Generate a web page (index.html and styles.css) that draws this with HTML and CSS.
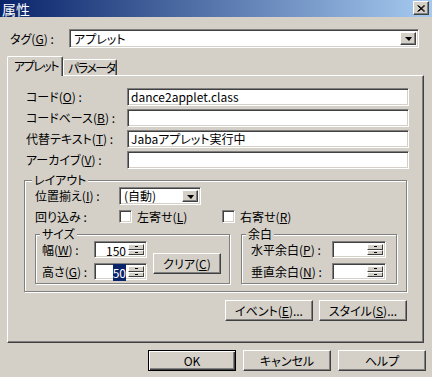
FILE: index.html
```html
<!DOCTYPE html>
<html lang="ja">
<head>
  <meta charset="UTF-8">
  <title>属性</title>
  <link rel="stylesheet" href="styles.css">
</head>
<body>
  <div class="titlebar">
    <span class="title">属性</span>
    <span class="close-btn">
      <svg width="8" height="7" viewBox="0 0 8 7"><path d="M0.5 0.5 L7 6.5 M1.5 0.5 L8 6.5 M7 0.5 L0.5 6.5 M8 0.5 L1.5 6.5" stroke="#000" stroke-width="1" fill="none"/></svg>
    </span>
  </div>

  <div class="tag-row">
    <span class="tag-label">タグ(<u>G</u>) :</span>
    <div class="combo combo-tag">
      <span class="combo-text">アプレット</span>
      <span class="drop-btn"><span class="arrow"></span></span>
    </div>
  </div>

  <div class="tabs">
    <div class="tab active">アプレット</div>
    <div class="tab">パラメータ</div>
  </div>

  <div class="panel">
    <div class="field-row">
      <span class="field-label">コード(<u>O</u>) :</span>
      <div class="textbox">dance2applet.class</div>
    </div>
    <div class="field-row">
      <span class="field-label">コードベース(<u>B</u>) :</span>
      <div class="textbox"></div>
    </div>
    <div class="field-row">
      <span class="field-label">代替テキスト(<u>T</u>) :</span>
      <div class="textbox">Jabaアプレット実行中</div>
    </div>
    <div class="field-row">
      <span class="field-label">アーカイブ(<u>V</u>) :</span>
      <div class="textbox"></div>
    </div>

    <div class="group layout-group">
      <div class="group-title">レイアウト</div>
      <div class="layout-row">
        <span class="layout-label">位置揃え(<u>I</u>) :</span>
        <div class="combo combo-align">
          <span class="combo-text">(自動)</span>
          <span class="drop-btn"><span class="arrow"></span></span>
        </div>
      </div>
      <div class="layout-row wrap-row">
        <span class="layout-label">回り込み :</span>
        <span class="check-item"><span class="checkbox"></span><span>左寄せ(<u>L</u>)</span></span>
        <span class="check-item"><span class="checkbox"></span><span>右寄せ(<u>R</u>)</span></span>
      </div>

      <div class="sub-groups">
        <div class="group size-group">
          <div class="group-title">サイズ</div>
          <div class="size-body">
            <div class="spin-rows">
              <div class="spin-row">
                <span class="spin-label size-label">幅(<u>W</u>) :</span>
                <div class="spinbox">
                  <span class="spin-value">150</span>
                  <span class="spin-btns"><span class="spin-up"></span><span class="spin-down"></span></span>
                </div>
              </div>
              <div class="spin-row">
                <span class="spin-label size-label">高さ(<u>G</u>) :</span>
                <div class="spinbox">
                  <span class="spin-value"><span class="selected">50</span></span>
                  <span class="spin-btns"><span class="spin-up"></span><span class="spin-down"></span></span>
                </div>
              </div>
            </div>
            <button class="btn clear-btn">クリア(<u>C</u>)</button>
          </div>
        </div>

        <div class="group margin-group">
          <div class="group-title">余白</div>
          <div class="spin-rows">
            <div class="spin-row">
              <span class="spin-label margin-label">水平余白(<u>P</u>) :</span>
              <div class="spinbox wide">
                <span class="spin-value"></span>
                <span class="spin-btns"><span class="spin-up"></span><span class="spin-down"></span></span>
              </div>
            </div>
            <div class="spin-row">
              <span class="spin-label margin-label">垂直余白(<u>N</u>) :</span>
              <div class="spinbox wide">
                <span class="spin-value"></span>
                <span class="spin-btns"><span class="spin-up"></span><span class="spin-down"></span></span>
              </div>
            </div>
          </div>
        </div>
      </div>
    </div>

    <div class="panel-buttons">
      <button class="btn">イベント(<u>E</u>)...</button>
      <button class="btn">スタイル(<u>S</u>)...</button>
    </div>
  </div>

  <div class="dialog-buttons">
    <button class="btn default">OK</button>
    <button class="btn">キャンセル</button>
    <button class="btn">ヘルプ</button>
  </div>
</body>
</html>
```

FILE: styles.css
```css
* {
  box-sizing: border-box;
}

body {
  margin: 0;
  width: 432px;
  height: 377px;
  overflow: hidden;
  background: #d4d0c8;
  font-family: "Noto Sans CJK JP", "Noto Sans", sans-serif;
  font-size: 12px;
  line-height: 14px;
  font-feature-settings: "palt";
  white-space: nowrap;
  color: #000;
}

u {
  text-decoration: underline;
  text-underline-offset: 1px;
}

/* title bar */
.titlebar {
  height: 17px;
  display: flex;
  justify-content: space-between;
  align-items: flex-start;
  padding: 1px 3px 0 2px;
  background: linear-gradient(90deg, #0a246a, #a6caf0);
  color: #fff;
}

.title {
  font-size: 14px;
  line-height: 16px;
}

.close-btn {
  width: 16px;
  height: 14px;
  display: flex;
  justify-content: center;
  align-items: center;
  background: #d4d0c8;
  border: 1px solid;
  border-color: #fff #404040 #404040 #fff;
  box-shadow: inset -1px -1px #808080;
}

/* shared control looks */
.combo,
.textbox,
.spinbox,
.checkbox {
  background: #fff;
  border: 1px solid;
  border-color: #808080 #fff #fff #808080;
  box-shadow: inset 1px 1px #404040, inset -1px -1px #d4d0c8;
}

.btn {
  font-family: inherit;
  font-size: 12px;
  line-height: 14px;
  font-feature-settings: "palt";
  color: #000;
  height: 21px;
  width: 88px;
  padding: 0;
  background: #d4d0c8;
  border: 1px solid;
  border-color: #fff #404040 #404040 #fff;
  box-shadow: inset -1px -1px #808080;
}

.btn.default {
  border-color: #000;
  box-shadow: inset 1px 1px #fff, inset -1px -1px #404040, inset -2px -2px #808080;
}

/* tag row */
.tag-row {
  display: flex;
  align-items: center;
  margin-top: 12px;
  padding-left: 10px;
}

.tag-label {
  width: 59px;
}

.combo {
  display: flex;
  align-items: center;
  padding: 2px;
}

.combo-text {
  flex: 1;
  padding-left: 2px;
}

.combo-tag {
  width: 350px;
  height: 19px;
}

.drop-btn {
  width: 16px;
  height: 100%;
  display: flex;
  justify-content: center;
  align-items: center;
  background: #d4d0c8;
  border: 1px solid;
  border-color: #fff #404040 #404040 #fff;
  box-shadow: inset -1px -1px #808080;
}

.arrow {
  width: 0;
  height: 0;
  border-left: 4px solid transparent;
  border-right: 3px solid transparent;
  border-top: 4px solid #000;
  margin-top: 1px;
}

/* tabs */
.tabs {
  display: flex;
  align-items: flex-end;
  height: 19px;
  margin-top: 8px;
  margin-left: 7px;
}

.tab {
  height: 16px;
  width: 54px;
  padding-left: 4px;
  line-height: 15px;
  letter-spacing: -1.5px;
  overflow: hidden;
  border: 1px solid;
  border-bottom: none;
  border-color: #fff #404040 #404040 #fff;
  border-radius: 2px 2px 0 0;
  box-shadow: inset -1px 0 #808080;
}

.tab.active {
  position: relative;
  z-index: 1;
  width: 56px;
  height: 20px;
  margin-bottom: -1px;
  padding-left: 6px;
  line-height: 17px;
  background: #d4d0c8;
}

/* panel */
.panel {
  width: 417px;
  height: 268px;
  margin-left: 7px;
  padding-top: 12px;
  border: 1px solid;
  border-color: #fff #404040 #404040 #fff;
  box-shadow: inset -1px -1px #808080;
}

.field-row {
  display: flex;
  align-items: center;
  height: 18px;
  margin-bottom: 3px;
  padding-left: 18px;
}

.field-label {
  width: 101px;
}

.textbox {
  width: 282px;
  height: 18px;
  padding: 1px 3px;
}

/* group boxes */
.group {
  border: 1px solid #808080;
  box-shadow: inset 1px 1px #fff, 1px 1px #fff;
}

.group-title {
  width: fit-content;
  height: 14px;
  padding: 0 2px;
  margin-top: -8px;
  background: #d4d0c8;
}

.layout-group {
  width: 383px;
  height: 112px;
  margin: 11px 0 0 16px;
}

.layout-group > .group-title {
  margin-left: 7px;
}

.layout-row {
  display: flex;
  align-items: center;
  height: 18px;
  padding-left: 10px;
}

.layout-label {
  width: 84px;
}

.combo-align {
  width: 82px;
  height: 18px;
}

.wrap-row {
  height: 13px;
  margin-top: 5px;
}

.check-item {
  display: flex;
  align-items: center;
  gap: 5px;
  width: 103px;
}

.checkbox {
  width: 13px;
  height: 13px;
}

.sub-groups {
  display: flex;
  gap: 11px;
  margin-top: 11px;
  padding-left: 10px;
}

.size-group {
  width: 195px;
  height: 50px;
}

.margin-group {
  width: 156px;
  height: 50px;
}

.sub-groups .group-title {
  margin-left: 4px;
}

.size-body {
  display: flex;
}

.spin-rows {
  display: flex;
  flex-direction: column;
  gap: 5px;
}

.spin-row {
  display: flex;
  align-items: center;
  height: 17px;
}

.size-label {
  width: 52px;
  margin-left: 6px;
}

.margin-label {
  width: 81px;
  margin-left: 9px;
}

.spinbox {
  display: flex;
  width: 53px;
  height: 17px;
  padding: 2px;
}

.spinbox.wide {
  width: 54px;
}

.spin-value {
  flex: 1;
  text-align: right;
  padding-right: 2px;
  line-height: 13px;
}

.selected {
  background: #0a246a;
  color: #fff;
}

.spin-btns {
  display: flex;
  flex-direction: column;
  width: 16px;
}

.spin-up,
.spin-down {
  flex: 1;
  display: flex;
  justify-content: center;
  align-items: center;
  background: #d4d0c8;
  border: 1px solid;
  border-color: #fff #404040 #404040 #fff;
}

.spin-up::after,
.spin-down::after {
  content: "";
  width: 3px;
  height: 1px;
  background: #000;
}

.clear-btn {
  width: 68px;
  margin: 12px 0 0 6px;
}

/* buttons */
.panel-buttons {
  display: flex;
  justify-content: flex-end;
  gap: 6px;
  margin-top: 8px;
  padding-right: 16px;
}

.dialog-buttons {
  display: flex;
  justify-content: flex-end;
  gap: 7px;
  margin-top: 7px;
  padding-right: 6px;
}
```
